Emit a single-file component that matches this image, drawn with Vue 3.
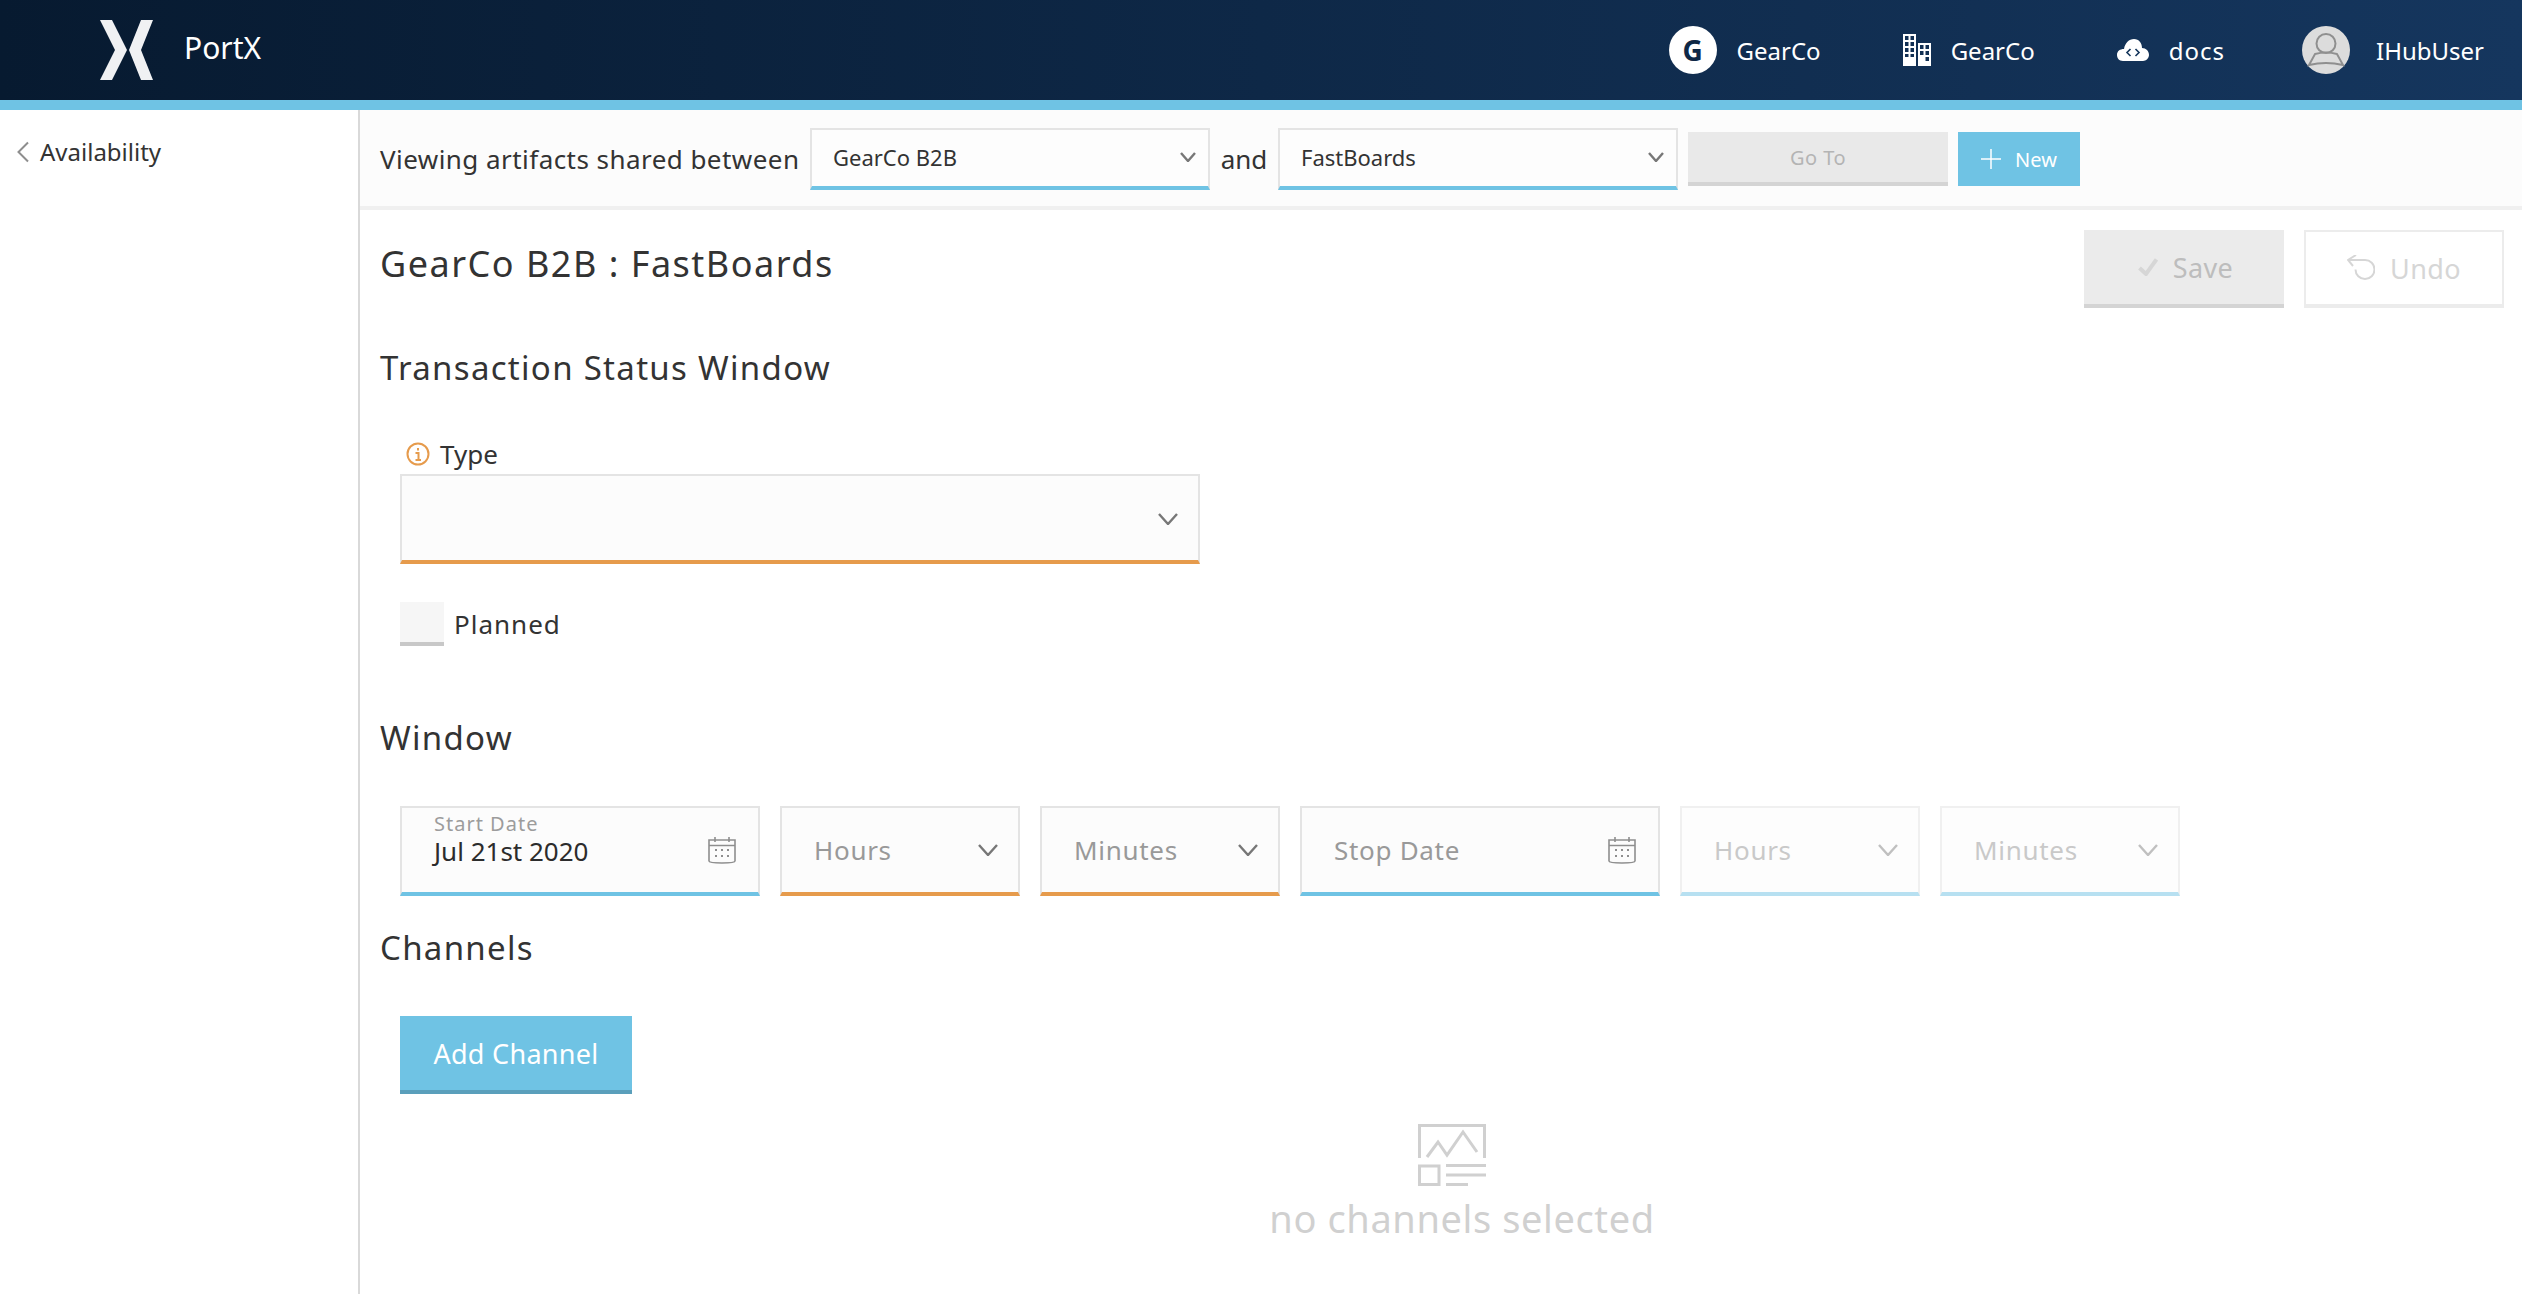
<template>
  <div class="page">
    <header class="topbar">
      <div class="brand">
        <svg class="logo" viewBox="0 0 54 60" width="54" height="60">
          <path d="M0 0H12L27 30L12 60H0L15 30Z" fill="#f0f1f3" />
          <path d="M53 0H41L29 30L41 60H53L41 30Z" fill="#f0f1f3" />
        </svg>
        <span class="brand-name">PortX</span>
      </div>
      <nav class="topnav">
        <div class="nav-item">
          <span class="org-badge">G</span>
          <span>GearCo</span>
        </div>
        <div class="nav-item">
          <svg viewBox="0 0 28 32" width="28" height="32">
            <path fill-rule="evenodd" fill="#fff" d="M0 0H13V32H0ZM2 2V6H5.500V2ZM7.500 2V6H11V2ZM2 8V12H5.500V8ZM7.500 8V12H11V8ZM2 14V18H5.500V14ZM7.500 14V18H11V14ZM2 20V23H5.500V20ZM7.500 20V23H11V20Z" />
            <path fill-rule="evenodd" fill="#fff" d="M15 9H28V32H15ZM17 11V15H20.500V11ZM22.500 11V15H26V11ZM17 17V21H20.500V17ZM22.500 17V21H26V17ZM22.500 23V27H26V23Z" />
          </svg>
          <span>GearCo</span>
        </div>
        <div class="nav-item">
          <svg viewBox="0 0 32 22" width="32" height="22">
            <path fill="#fff" d="M6 22C2 22 0 19 0 16C0 12 3 10 7 10C8 4 12 0 17 0C22 0 25 4 25 9C29 9 32 12 32 16C32 19 29 22 26 22Z" />
            <path d="M13.500 10L10 13.500L13.500 17M18.500 10L22 13.500L18.500 17" fill="none" stroke="#15365c" stroke-width="1.600" />
          </svg>
          <span class="docs-label">docs</span>
        </div>
        <div class="nav-item user-item">
          <span class="avatar">
            <svg viewBox="0 0 48 48" width="48" height="48">
              <circle cx="24" cy="17.500" r="9.500" fill="none" stroke="#8f8f8f" stroke-width="2" />
              <path d="M13 28Q24 25 35 28L41 39Q24 35 7 39Z" fill="none" stroke="#8f8f8f" stroke-width="2" />
            </svg>
          </span>
          <span>IHubUser</span>
        </div>
      </nav>
    </header>

    <div class="body">
      <aside class="sidebar">
        <div class="back-link">
          <svg viewBox="0 0 14 22" width="14" height="22">
            <path d="M12 1.500L2.500 11L12 20.500" fill="none" stroke="#8e8e8e" stroke-width="2" />
          </svg>
          <span>Availability</span>
        </div>
      </aside>

      <main class="content">
        <div class="toolbar">
          <span class="toolbar-label">Viewing artifacts shared between</span>
          <div class="picker">
            <span>GearCo B2B</span>
            <svg class="caret-sm" viewBox="0 0 16 10" width="16" height="10"><path d="M1 1L8 9L15 1" /></svg>
          </div>
          <span class="toolbar-and">and</span>
          <div class="picker">
            <span>FastBoards</span>
            <svg class="caret-sm" viewBox="0 0 16 10" width="16" height="10"><path d="M1 1L8 9L15 1" /></svg>
          </div>
          <button class="btn-goto" disabled>Go To</button>
          <button class="btn-new">
            <svg viewBox="0 0 20 20" width="20" height="20"><path d="M10 0V20M0 10H20" stroke="#fff" stroke-width="1.500" /></svg>
            <span>New</span>
          </button>
        </div>

        <div class="editor">
          <div class="title-row">
            <h1>GearCo B2B : FastBoards</h1>
            <div class="actions">
              <button class="btn-save" disabled>
                <svg viewBox="0 0 20 18" width="20" height="18"><path d="M1.500 10L8 16L18.500 1.500" fill="none" stroke="#d6d6d6" stroke-width="4" /></svg>
                <span>Save</span>
              </button>
              <button class="btn-undo" disabled>
                <svg viewBox="0 0 28 26" width="28" height="26">
                  <path d="M9 0L1 5L6 11M1 5H18A9.500 9.500 0 1 1 8.500 14.500" fill="none" stroke="#d6d6d6" stroke-width="2" />
                </svg>
                <span>Undo</span>
              </button>
            </div>
          </div>

          <h2 class="section-title">Transaction Status Window</h2>
          <div class="type-field">
            <label class="type-label">
              <svg viewBox="0 0 24 24" width="24" height="24">
                <circle cx="12" cy="12" r="10.500" fill="none" stroke="#e69b4c" stroke-width="2" />
                <path d="M12 6V8.500M9.500 11H12.500V18M9.500 18H15" fill="none" stroke="#e69b4c" stroke-width="2" />
              </svg>
              <span>Type</span>
            </label>
            <div class="field field-type warn">
              <svg class="caret" viewBox="0 0 20 12" width="20" height="12"><path d="M1 1L10 11L19 1" /></svg>
            </div>
          </div>
          <div class="check-row">
            <span class="checkbox"></span>
            <span>Planned</span>
          </div>

          <h2 class="section-title window-title">Window</h2>
          <div class="window-row">
            <div class="field date">
              <div class="date-text">
                <span class="float-label">Start Date</span>
                <span class="date-value">Jul 21st 2020</span>
              </div>
              <svg class="calendar" viewBox="0 0 28 28" width="28" height="28"><use href="#cal" /></svg>
            </div>
            <div class="field time warn">
              <span class="placeholder">Hours</span>
              <svg class="caret" viewBox="0 0 20 12" width="20" height="12"><path d="M1 1L10 11L19 1" /></svg>
            </div>
            <div class="field time warn">
              <span class="placeholder">Minutes</span>
              <svg class="caret" viewBox="0 0 20 12" width="20" height="12"><path d="M1 1L10 11L19 1" /></svg>
            </div>
            <div class="field date">
              <span class="placeholder">Stop Date</span>
              <svg class="calendar" viewBox="0 0 28 28" width="28" height="28"><use href="#cal" /></svg>
            </div>
            <div class="field time off">
              <span class="placeholder">Hours</span>
              <svg class="caret" viewBox="0 0 20 12" width="20" height="12"><path d="M1 1L10 11L19 1" /></svg>
            </div>
            <div class="field time off">
              <span class="placeholder">Minutes</span>
              <svg class="caret" viewBox="0 0 20 12" width="20" height="12"><path d="M1 1L10 11L19 1" /></svg>
            </div>
          </div>

          <h2 class="section-title channels-title">Channels</h2>
          <button class="btn-add">Add Channel</button>

          <div class="empty">
            <svg viewBox="0 0 68 62" width="68" height="62">
              <path d="M1.500 34V1.500H66.500V34M9 33L20 18L29 31L45 8L59 28M1.500 42H21V60.500H1.500ZM28 41.500H68M28 51H68M28 60.500H50" fill="none" stroke="#d0d0d0" stroke-width="3" />
            </svg>
            <span>no channels selected</span>
          </div>
        </div>
      </main>
    </div>

    <svg class="defs">
      <symbol id="cal" viewBox="0 0 28 28">
        <path d="M1 4H27V25C27 26 24 27 14 27C4 27 1 26 1 25ZM1 9.500H27M7 1V6M21 1V6" fill="none" stroke="#8e8e8e" stroke-width="1.600" />
        <path d="M7 14H9M13 14H15M19 14H21M7 20H9M13 20H15M19 20H21" stroke="#8e8e8e" stroke-width="2.200" />
      </symbol>
    </svg>
  </div>
</template>

<script setup>
</script>

<style>
html, body {
  margin: 0;
  background: #fff;
}
</style>

<style scoped>
.page {
  height: 1294px;
  display: flex;
  flex-direction: column;
  overflow: hidden;
  font-family: "Noto Sans", "Open Sans", sans-serif;
  color: #333;
}

.topbar {
  height: 100px;
  flex: none;
  display: flex;
  justify-content: space-between;
  align-items: center;
  border-bottom: 10px solid #6fc3e4;
  background: linear-gradient(90deg, #071a30 0%, #15365e 100%);
  color: #fff;
}

.brand {
  display: flex;
  align-items: center;
  padding-left: 100px;
}

.brand-name {
  margin-left: 30px;
  margin-bottom: 6px;
  font-size: 30px;
}

.topnav {
  display: flex;
  align-items: center;
  padding-right: 38px;
}

.nav-item {
  display: flex;
  align-items: center;
  gap: 20px;
  margin-left: 82px;
  font-size: 24px;
}

.user-item {
  margin-left: 77px;
}

.docs-label {
  letter-spacing: 1px;
}

.org-badge {
  width: 48px;
  height: 48px;
  display: flex;
  align-items: center;
  justify-content: center;
  border-radius: 50%;
  background: #fff;
  color: #0e2846;
  font-size: 28px;
  font-weight: 700;
}

.avatar {
  width: 48px;
  height: 48px;
  display: block;
  margin-right: 6px;
  border-radius: 50%;
  background: #dcdcdc;
}

.body {
  flex: 1;
  display: flex;
  min-height: 0;
}

.sidebar {
  width: 358px;
  flex: none;
  border-right: 2px solid #d9d9d9;
}

.back-link {
  display: flex;
  align-items: center;
  gap: 10px;
  padding: 25px 0 0 16px;
  font-size: 24px;
}

.content {
  flex: 1;
  min-width: 0;
}

.toolbar {
  height: 94px;
  display: flex;
  align-items: center;
  padding: 2px 0 0 20px;
  background: #fcfcfc;
  border-bottom: 4px solid #f0f0f0;
  font-size: 26px;
}

.toolbar-label {
  width: 430px;
  flex: none;
  letter-spacing: 0.45px;
}

.toolbar-and {
  width: 68px;
  flex: none;
  text-align: center;
}

.picker {
  width: 400px;
  height: 62px;
  box-sizing: border-box;
  flex: none;
  display: flex;
  justify-content: space-between;
  align-items: center;
  padding: 0 12px 2px 21px;
  background: #fdfdfd;
  border: 2px solid #e4e4e4;
  border-bottom: 4px solid #6fc3e4;
  font-size: 22px;
}

.caret-sm,
.caret {
  fill: none;
  stroke: #777;
  stroke-width: 2.400;
}

button {
  font-family: inherit;
  padding: 0;
  border: 0;
}

.btn-goto {
  width: 260px;
  height: 54px;
  margin-left: 10px;
  background: #e9e9e9;
  border-bottom: 4px solid #d4d4d4;
  color: #b4b4b4;
  font-size: 20px;
  letter-spacing: 0.5px;
}

.btn-new {
  width: 122px;
  height: 54px;
  margin-left: 10px;
  display: flex;
  align-items: center;
  justify-content: center;
  gap: 14px;
  background: #6fc3e4;
  color: #fff;
  font-size: 20px;
}

.editor {
  padding: 20px 18px 0 20px;
}

.title-row {
  display: flex;
  justify-content: space-between;
  height: 78px;
}

h1,
h2 {
  margin: 0;
  font-weight: 400;
}

h1 {
  font-size: 36px;
  line-height: 68px;
  letter-spacing: 1.500px;
}

.actions {
  display: flex;
  gap: 20px;
}

.btn-save,
.btn-undo {
  width: 200px;
  height: 78px;
  display: flex;
  align-items: center;
  justify-content: center;
  gap: 15px;
  font-size: 27px;
  letter-spacing: 0.4px;
}

.btn-save {
  padding-left: 3px;
  background: #ebebeb;
  border-bottom: 4px solid #d4d4d4;
  color: #bdbdbd;
}

.btn-undo {
  box-sizing: border-box;
  background: #fff;
  border: 2px solid #ececec;
  border-bottom-width: 4px;
  color: #d6d6d6;
}

.section-title {
  font-size: 33px;
  line-height: 46px;
  letter-spacing: 1.300px;
}

.title-row + .section-title {
  margin-top: 37px;
}

.type-field {
  width: 800px;
  margin: 47px 0 0 20px;
}

.type-label {
  display: flex;
  align-items: center;
  gap: 10px;
  height: 32px;
  padding-left: 6px;
  font-size: 26px;
}

.field {
  box-sizing: border-box;
  height: 90px;
  display: flex;
  align-items: center;
  justify-content: space-between;
  background: #fcfcfc;
  border: 2px solid #e4e4e4;
  border-bottom: 4px solid #6fc3e4;
}

.warn {
  border-bottom-color: #e69b4c;
}

.field-type {
  margin-top: 4px;
  padding: 2px 20px 0 32px;
  justify-content: flex-end;
}

.check-row {
  display: flex;
  align-items: center;
  gap: 10px;
  margin: 38px 0 0 20px;
  font-size: 26px;
  letter-spacing: 1px;
}

.checkbox {
  width: 44px;
  height: 44px;
  box-sizing: border-box;
  background: #f6f6f6;
  border-bottom: 4px solid #c8c8c8;
}

.window-title {
  margin-top: 69px;
}

.window-row {
  display: flex;
  gap: 20px;
  margin: 45px 0 0 20px;
}

.date {
  width: 360px;
  padding: 0 22px 0 32px;
}

.time {
  width: 240px;
  padding: 0 20px 0 32px;
}

.off {
  background: #fdfdfd;
  border-color: #f0f0f0;
  border-bottom-color: #b7e0f1;
}

.off .placeholder {
  color: #c9c9c9;
}

.off .caret {
  stroke: #c0c0c0;
}

.date-text {
  display: flex;
  flex-direction: column;
  margin-top: -20px;
}

.float-label {
  font-size: 20px;
  line-height: 22px;
  letter-spacing: 1px;
  color: #9c9c9c;
}

.date-value {
  font-size: 26px;
  line-height: 32px;
  color: #2c2c2c;
}

.placeholder {
  font-size: 26px;
  letter-spacing: 0.7px;
  color: #999;
}

.channels-title {
  margin-top: 29px;
}

.btn-add {
  display: block;
  width: 232px;
  height: 78px;
  margin: 45px 0 0 20px;
  background: #6fc3e4;
  border-bottom: 4px solid #5a9fbb;
  color: #fff;
  font-size: 27px;
  letter-spacing: 0.3px;
}

.empty {
  display: flex;
  flex-direction: column;
  align-items: center;
  gap: 6px;
  margin: 30px 0 0 40px;
  color: #d0d0d0;
  font-size: 38px;
  letter-spacing: 0.6px;
}

.empty svg {
  margin-right: 20px;
}

.defs {
  display: none;
}
</style>
